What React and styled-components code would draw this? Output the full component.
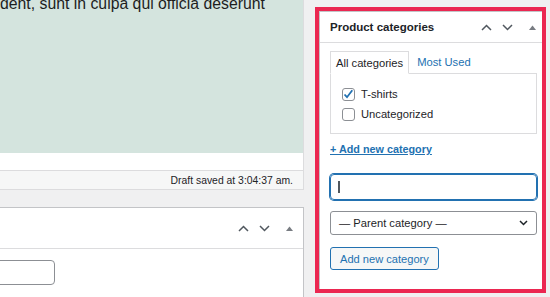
import React from 'react';
import styled, { createGlobalStyle } from 'styled-components';

const GlobalStyle = createGlobalStyle`
  html, body {
    margin: 0;
    padding: 0;
  }
  body {
    background: #f0f0f1;
    font-family: "Liberation Sans", Arial, sans-serif;
    color: #1d2327;
    overflow: hidden;
  }
  * {
    box-sizing: border-box;
  }
`;

const Page = styled.div`
  display: grid;
  grid-template-columns: 304px 231px;
  column-gap: 11px;
  width: 550px;
  height: 297px;
  overflow: hidden;
`;

const MainColumn = styled.div`
  display: flex;
  flex-direction: column;
  min-width: 0;
`;

const Editor = styled.div`
  background: #fff;
  border-right: 1px solid #dcdcde;
`;

const Canvas = styled.div`
  height: 153px;
  background: #d4e4de;
  overflow: hidden;
`;

const Paragraph = styled.p`
  margin: -8px 0 0;
  font-size: 15.8px;
  line-height: 24px;
  color: #1e1e1e;
  white-space: nowrap;
`;

const CanvasFooter = styled.div`
  height: 17px;
`;

const StatusBar = styled.div`
  height: 20px;
  border-top: 1px solid #dcdcde;
  border-bottom: 1px solid #dcdcde;
  background: #f6f7f7;
  display: flex;
  align-items: center;
  justify-content: flex-end;
  padding-right: 10px;
  font-size: 10.4px;
`;

const Postbox = styled.div`
  margin-top: ${p => p.$top || 0}px;
  flex: 1;
  background: #fff;
  border-top: 1px solid #c3c4c7;
  border-right: ${p => (p.$side ? '1px solid #c3c4c7' : 'none')};
  border-left: ${p => (p.$side ? 'none' : '1px solid #c3c4c7')};
  overflow: hidden;
`;

const PostboxHeader = styled.div`
  height: ${p => p.$h}px;
  display: flex;
  align-items: center;
  justify-content: space-between;
  border-bottom: 1px solid #dcdcde;
  padding: 0 ${p => p.$pr}px 0 10px;
`;

const Title = styled.h2`
  margin: 0;
  font-size: 11.5px;
  font-weight: 700;
  color: #1d2327;
`;

const Actions = styled.div`
  display: flex;
  align-items: center;
  margin-left: auto;
`;

const ActionBtn = styled.span`
  width: ${p => p.$w}px;
  margin-left: ${p => p.$ml || 0}px;
  height: 20px;
  display: flex;
  align-items: center;
  justify-content: center;
`;

const SideColumn = styled.div`
  padding-top: 7px;
`;

const Highlight = styled.div`
  height: 286px;
  border: 4px solid #eb2751;
  display: flex;
  flex-direction: column;
`;

const PanelBody = styled.div`
  padding: 0 5px 0 10px;
  display: flex;
  flex-direction: column;
  align-items: flex-start;
`;

const Tabs = styled.div`
  margin-top: 8px;
  display: flex;
  align-items: flex-start;
  height: 22px;
  font-size: 11.2px;
`;

const Tab = styled.span`
  position: relative;
  height: 23px;
  padding: 0 5px;
  display: flex;
  align-items: center;
  background: #fff;
  border: 1px solid #dcdcde;
  border-bottom-color: #fff;
  color: #1d2327;
`;

const TabLink = styled.span`
  height: 22px;
  margin-left: 8px;
  display: flex;
  align-items: center;
  color: #2271b1;
`;

const TabPanel = styled.div`
  align-self: stretch;
  border: 1px solid #dcdcde;
  padding: 10px 11px 9px;
`;

const CheckRow = styled.label`
  height: 20px;
  display: flex;
  align-items: center;
  gap: 6px;
  font-size: 11.2px;
`;

const Box = styled.span`
  width: 13px;
  height: 13px;
  border: 1px solid #8c8f94;
  border-radius: 3px;
  background: #fff;
  display: flex;
  align-items: center;
  justify-content: center;
`;

const AddLink = styled.a`
  margin-top: 7px;
  line-height: 16px;
  font-size: 10.8px;
  font-weight: 700;
  color: #2271b1;
  text-decoration: underline;
`;

const FocusedInput = styled.div`
  align-self: stretch;
  margin-top: 17px;
  height: 26px;
  border: 1px solid #2271b1;
  box-shadow: 0 0 0 1px #2271b1;
  border-radius: 4px;
  display: flex;
  align-items: center;
  padding-left: 7px;
`;

const Caret = styled.span`
  width: 1.5px;
  height: 12px;
  background: #50575e;
`;

const Select = styled.div`
  align-self: stretch;
  margin-top: 11px;
  height: 24px;
  border: 1px solid #8c8f94;
  border-radius: 3px;
  display: flex;
  align-items: center;
  justify-content: space-between;
  padding: 0 8px;
  font-size: 11.2px;
`;

const Button = styled.button`
  margin-top: 12px;
  height: 23px;
  padding: 0 9px;
  border: 1px solid #2271b1;
  border-radius: 3px;
  background: #f6f7f7;
  color: #2271b1;
  font-family: inherit;
  font-size: 11.1px;
`;

const LeftBody = styled.div`
  padding-top: 11px;
`;

const TextField = styled.div`
  width: 105px;
  height: 25px;
  margin-left: -50px;
  border: 1px solid #8c8f94;
  border-radius: 4px;
`;

const ChevronUp = () => (
  <svg width="11" height="7" viewBox="0 0 11 7">
    <path d="M1 6 L5.5 1.5 L10 6" fill="none" stroke="#50575e" strokeWidth="1.5" />
  </svg>
);

const ChevronDown = () => (
  <svg width="11" height="7" viewBox="0 0 11 7">
    <path d="M1 1 L5.5 5.5 L10 1" fill="none" stroke="#50575e" strokeWidth="1.5" />
  </svg>
);

const Triangle = () => (
  <svg width="7" height="5" viewBox="0 0 7 5">
    <polygon points="0,5 3.5,0.5 7,5" fill="#787c82" />
  </svg>
);

const HeaderActions = () => (
  <Actions>
    <ActionBtn $w={21}><ChevronUp /></ActionBtn>
    <ActionBtn $w={21}><ChevronDown /></ActionBtn>
    <ActionBtn $w={20} $ml={4.5}><Triangle /></ActionBtn>
  </Actions>
);

const Checkbox = ({ checked }) => (
  <Box>
    {checked && (
      <svg width="13" height="13" viewBox="0 0 13 13" style={{ overflow: 'visible' }}>
        <path d="M2.5 6.5 L5 9.2 L10.3 2.2" fill="none" stroke="#2271b1" strokeWidth="1.8" />
      </svg>
    )}
  </Box>
);

export default function App() {
  return (
    <>
      <GlobalStyle />
      <Page>
        <MainColumn>
          <Editor>
            <Canvas>
              <Paragraph>dent, sunt in culpa qui officia deserunt</Paragraph>
            </Canvas>
            <CanvasFooter />
            <StatusBar>Draft saved at 3:04:37 am.</StatusBar>
          </Editor>
          <Postbox $top={17} $side>
            <PostboxHeader $h={41} $pr={4}>
              <HeaderActions />
            </PostboxHeader>
            <LeftBody>
              <TextField />
            </LeftBody>
          </Postbox>
        </MainColumn>

        <SideColumn>
          <Highlight>
            <Postbox>
              <PostboxHeader $h={31} $pr={0}>
                <Title>Product categories</Title>
                <HeaderActions />
              </PostboxHeader>
              <PanelBody>
                <Tabs>
                  <Tab>All categories</Tab>
                  <TabLink>Most Used</TabLink>
                </Tabs>
                <TabPanel>
                  <CheckRow><Checkbox checked />T-shirts</CheckRow>
                  <CheckRow><Checkbox />Uncategorized</CheckRow>
                </TabPanel>
                <AddLink>+ Add new category</AddLink>
                <FocusedInput><Caret /></FocusedInput>
                <Select>
                  <span>— Parent category —</span>
                  <svg width="9" height="6" viewBox="0 0 9 6">
                    <path d="M1 1 L4.5 4.5 L8 1" fill="none" stroke="#1d2327" strokeWidth="1.5" />
                  </svg>
                </Select>
                <Button>Add new category</Button>
              </PanelBody>
            </Postbox>
          </Highlight>
        </SideColumn>
      </Page>
    </>
  );
}
